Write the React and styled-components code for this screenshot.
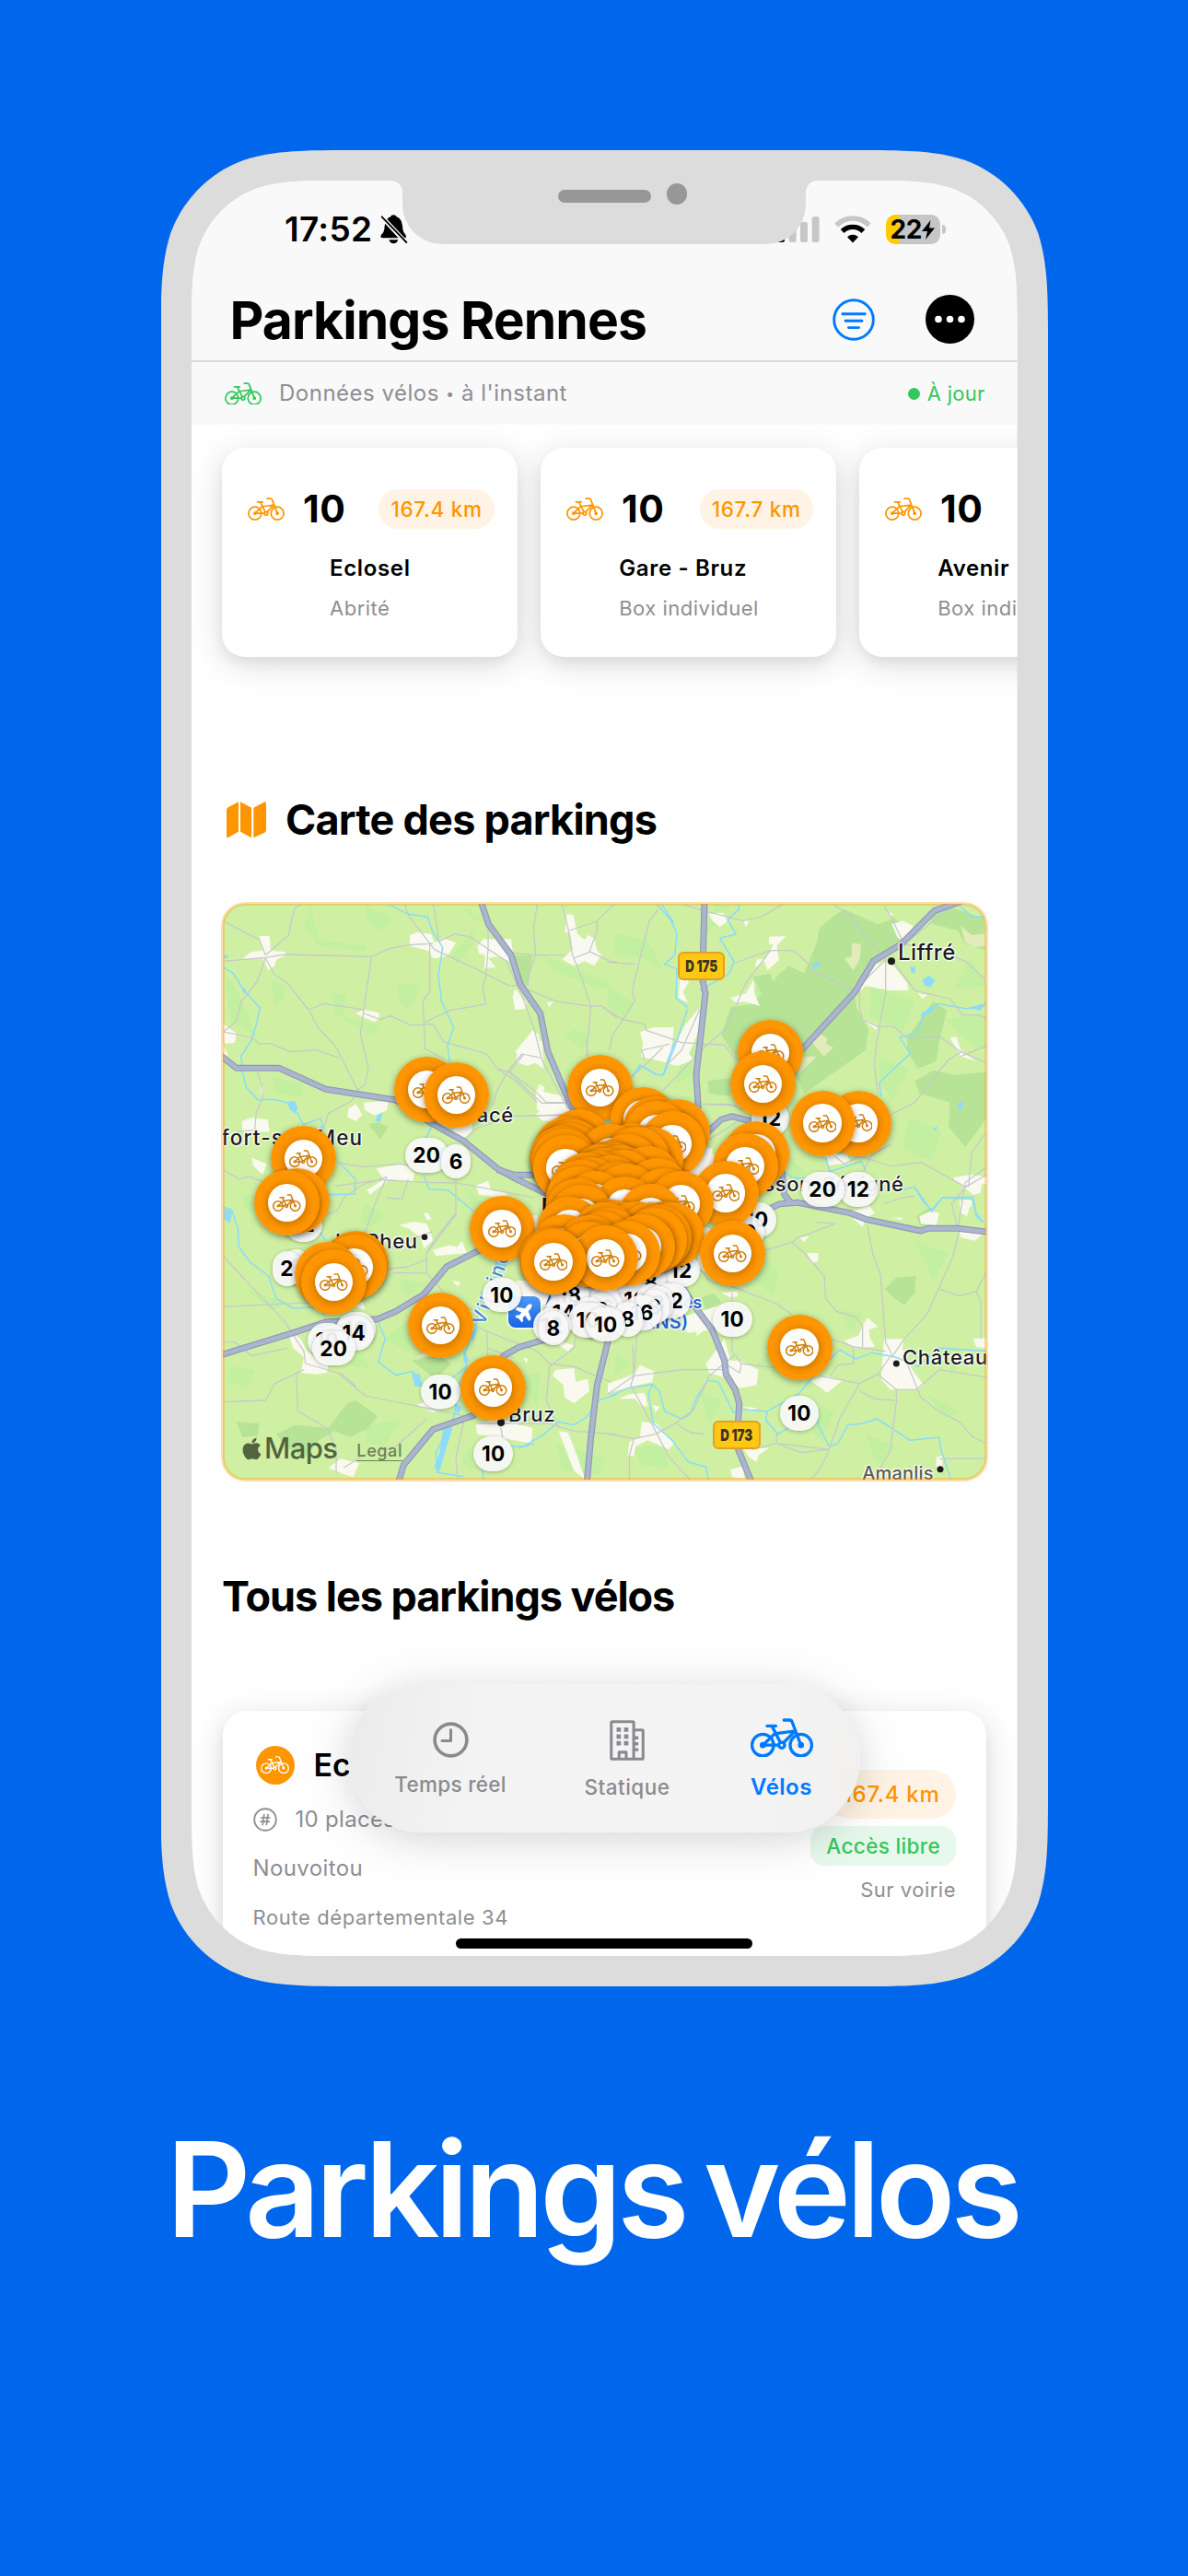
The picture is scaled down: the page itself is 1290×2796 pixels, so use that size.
import React from "react";
import styled, { createGlobalStyle } from "styled-components";
import { FaApple, FaPlane } from "react-icons/fa";

const Global = createGlobalStyle`
  * { box-sizing: border-box; }
  body { margin: 0; background: #0067ec; font-family: Inter, "Liberation Sans", sans-serif; color: #000; }
`;

/* Continuous-curvature rounded rectangle, used as a clip for the device and its screen. */
const smoothRect = (w, h, r) => {
  const a = 1.5287 * r, b = 1.0885 * r, c = 0.8684 * r, d = 0.6315 * r, e = 0.0749 * r, f = 0.3728 * r, g = 0.1691 * r;
  return `M${a} 0H${w - a}C${w - b} 0 ${w - c} 0 ${w - d} ${e}C${w - f} ${g} ${w - g} ${f} ${w - e} ${d}C${w} ${c} ${w} ${b} ${w} ${a}` +
    `V${h - a}C${w} ${h - b} ${w} ${h - c} ${w - e} ${h - d}C${w - g} ${h - f} ${w - f} ${h - g} ${w - d} ${h - e}C${w - c} ${h} ${w - b} ${h} ${w - a} ${h}` +
    `H${a}C${b} ${h} ${c} ${h} ${d} ${h - e}C${f} ${h - g} ${g} ${h - f} ${e} ${h - d}C0 ${h - c} 0 ${h - b} 0 ${h - a}` +
    `V${a}C0 ${b} 0 ${c} ${e} ${d}C${g} ${f} ${f} ${g} ${d} ${e}C${c} 0 ${b} 0 ${a} 0Z`;
};

const Page = styled.main`
  width: 1290px;
  height: 2796px;
  overflow: hidden;
  padding-top: 163px;
  background: #0067ec;
`;
const Phone = styled.section`
  width: 963.5px;
  height: 1993px;
  margin-left: 174.5px;
  padding: 33px 33.5px;
  background: #dcdcdc;
  clip-path: path("${smoothRect(963.5, 1993, 143)}");
`;
const Screen = styled.div`
  position: relative;
  width: 896.5px;
  height: 1927px;
  overflow: hidden;
  display: flex;
  flex-direction: column;
  background: #fff;
  clip-path: path("${smoothRect(896.5, 1927, 112)}");
`;
const Notch = styled.div`
  position: absolute;
  top: -1px;
  left: 229px;
  width: 438px;
  height: 69.5px;
  padding-left: 169px;
  background: #dcdcdc;
  border-radius: 0 0 43px 43px;
  display: flex;
  gap: 16.7px;
  &::before, &::after {
    content: "";
    position: absolute;
    top: 0;
    width: 12px;
    height: 13px;
    background: radial-gradient(circle at 0 100%, transparent 11.5px, #dcdcdc 12px);
  }
  &::before { left: -12px; }
  &::after { right: -12px; transform: scaleX(-1); }
`;
const Speaker = styled.div`
  width: 101px;
  height: 14px;
  margin-top: 11px;
  border-radius: 7px;
  background: #979797;
`;
const Lens = styled.div`
  width: 22.5px;
  height: 22.5px;
  margin-top: 4px;
  border-radius: 50%;
  background: #979797;
`;

const StatusRow = styled.div`
  height: 106px;
  flex: none;
  display: flex;
  align-items: center;
  padding: 0 78px 0 101px;
  background: #f9f9f9;
`;
const Clock = styled.span`
  font-size: 37px;
  font-weight: 600;
  letter-spacing: 0.3px;
  line-height: 44px;
  margin-right: auto;
  display: flex;
  align-items: center;
  gap: 9px;
`;
const StatusIcons = styled.div`
  display: flex;
  align-items: center;
  gap: 16px;
`;
const Battery = styled.div`
  position: relative;
  width: 59px;
  height: 32px;
  border-radius: 10px;
  display: flex;
  align-items: center;
  padding-left: 5px;
  margin-right: 6px;
  background: linear-gradient(90deg, #ffcc00 14px, #c6c6c6 14px);
  font-size: 28px;
  font-weight: 700;
  letter-spacing: -0.4px;
  &::after {
    content: "";
    position: absolute;
    right: -6px;
    top: 11px;
    width: 4px;
    height: 10px;
    border-radius: 0 5px 5px 0;
    background: #c6c6c6;
  }
`;

const TitleBar = styled.header`
  height: 91px;
  flex: none;
  display: flex;
  align-items: center;
  padding: 0 47px 0 41.5px;
  background: #f9f9f9;
  border-bottom: 2px solid #dadadb;
`;
const Title = styled.h1`
  margin: 3px auto 0 0;
  font-size: 57px;
  line-height: 68px;
  font-weight: 700;
  letter-spacing: -0.93px;
  white-space: nowrap;
`;
const HeaderIcons = styled.div`
  display: flex;
  align-items: center;
  gap: 54.5px;
`;
const SyncBar = styled.div`
  height: 68px;
  flex: none;
  display: flex;
  align-items: center;
  gap: 19px;
  padding: 0 35px 0 36px;
  background: #f9f9f9;
`;
const T = styled.span`
  font-size: ${(p) => p.$s}px;
  line-height: ${(p) => p.$lh || 28}px;
  font-weight: ${(p) => p.$w || 400};
  letter-spacing: ${(p) => p.$ls || 0}px;
  color: ${(p) => p.$c || "#8e8e93"};
  white-space: nowrap;
  & > small { font-size: 0.68em; vertical-align: 0.1em; }
`;
const Fresh = styled.span`
  margin-left: auto;
  display: flex;
  align-items: center;
  gap: 8px;
`;
const Dot = styled.i`
  width: 13px;
  height: 13px;
  border-radius: 50%;
  background: #34c759;
`;

const Carousel = styled.div`
  flex: none;
  display: flex;
  gap: 25.3px;
  padding: 25px 0 0 33px;
`;
const Card = styled.article`
  flex: none;
  width: 320.7px;
  height: 227px;
  padding: 45px 25px 0 28px;
  border-radius: 25px;
  background: #fff;
  box-shadow: 0 8px 34px rgba(40, 40, 60, 0.17), 0 6px 12px rgba(40, 40, 60, 0.05);
`;
const CardHead = styled.div`
  display: flex;
  align-items: center;
  height: 43px;
  gap: 20px;
`;
const Pill = styled.span`
  margin-left: auto;
  height: ${(p) => p.$h || 43}px;
  border-radius: ${(p) => p.$r || 21}px;
  padding: 0 ${(p) => p.$px || 13}px;
  background: ${(p) => p.$bg || "#fff3e5"};
  display: flex;
  align-items: center;
`;
const CardText = styled.div`
  display: flex;
  flex-direction: column;
  gap: 14px;
  margin-top: 28px;
  padding-left: ${(p) => p.$indent}px;
`;
const Heading = styled.h2`
  flex: none;
  display: flex;
  align-items: center;
  gap: 21px;
  height: 60px;
  margin: ${(p) => p.$mt}px 0 0 ${(p) => p.$ml}px;
  font-size: 45px;
  line-height: 60px;
  font-weight: 700;
  letter-spacing: ${(p) => p.$ls}px;
  white-space: nowrap;
`;

const MapCard = styled.div`
  position: relative;
  flex: none;
  width: 832.5px;
  height: 629px;
  margin: 59px 0 0 32px;
  border-radius: 26px;
  overflow: hidden;
  background: #fff;
  &::after {
    content: "";
    position: absolute;
    inset: 0;
    border-radius: 26px;
    border: 4px solid rgba(255, 149, 0, 0.33);
    z-index: 5;
  }
`;
const MapCanvas = styled.div`
  position: absolute;
  inset: 2px;
  border-radius: 24px;
  overflow: hidden;
  & > svg { display: block; position: absolute; left: -2px; top: -2px; }
`;
const Place = styled.span`
  position: absolute;
  left: ${(p) => p.$x - 242}px;
  top: ${(p) => p.$y - 981}px;
  transform: translateY(-50%) rotate(${(p) => p.$rot || 0}deg);
  transform-origin: 0 50%;
  font-size: ${(p) => p.$s || 22}px;
  line-height: 26px;
  font-weight: ${(p) => p.$w || 500};
  letter-spacing: ${(p) => p.$ls ?? 0.7}px;
  color: ${(p) => p.$c || "#1c1c1e"};
  white-space: nowrap;
  text-shadow: 0 0 2px #fff, 0 0 2px #fff, 0 0 3px #fff, 1px 1px 1px #fff, -1px -1px 1px #fff;
`;
const Shield = styled.span`
  position: absolute;
  left: ${(p) => p.$x - 242}px;
  top: ${(p) => p.$y - 981}px;
  width: 51.5px;
  height: 31px;
  border: 2px solid #e3a024;
  border-radius: 6px;
  background: #ffc814;
  color: #3b3620;
  font: 700 18px/27px Inter, sans-serif;
  display: flex;
  justify-content: center;
  & > b { transform: scaleX(0.74); white-space: nowrap; }
`;
const Airport = styled.span`
  position: absolute;
  left: 310px;
  top: 426px;
  width: 35px;
  height: 34px;
  border-radius: 8px;
  background: linear-gradient(#4d9af5, #1a62e6);
  box-shadow: 0 0 0 2px rgba(255, 255, 255, 0.6);
  display: flex;
  align-items: center;
  justify-content: center;
  color: #fff;
  & > svg { transform: rotate(-50deg); }
`;
const Pin = styled.div`
  position: absolute;
  left: ${(p) => p.$x - 242 - 40}px;
  top: ${(p) => p.$y - 981 - 35.5}px;
  width: 80px;
  display: flex;
  flex-direction: column;
  align-items: center;
  gap: 17.5px;
`;
const PinDisc = styled.div`
  width: 71px;
  height: 71px;
  border-radius: 50%;
  display: flex;
  align-items: center;
  justify-content: center;
  background: radial-gradient(circle at 50% 52%, #d97f00 20px, #f08c00 24px, #ff9500 29px);
  box-shadow: 0 2px 7px rgba(0, 0, 0, 0.42);
`;
const PinCore = styled.div`
  width: 41.5px;
  height: 41.5px;
  border-radius: 50%;
  background: #fff;
  display: flex;
  align-items: center;
  justify-content: center;
`;
const PinCount = styled.span`
  height: 37.5px;
  min-width: 32px;
  padding: 0 8.5px;
  border-radius: 19px;
  background: rgba(246, 246, 246, 0.94);
  box-shadow: 0 1px 4px rgba(0, 0, 0, 0.28);
  font-size: 22.5px;
  font-weight: 700;
  line-height: 37.5px;
  letter-spacing: 0.3px;
`;
const Attribution = styled.div`
  position: absolute;
  left: 18px;
  top: 573px;
  height: 36px;
  display: flex;
  align-items: center;
  color: #52633f;
  & u {
    margin: 5px 0 0 21px;
    font-size: 18px;
    font-weight: 500;
    letter-spacing: 0.6px;
    color: #6c8158;
    text-underline-offset: 4px;
  }
`;

const ListCard = styled.article`
  flex: none;
  display: flex;
  justify-content: space-between;
  width: 829.5px;
  height: 380px;
  margin: 94px 0 0 33.5px;
  padding: 38px 33px 0 33px;
  border-radius: 26px;
  background: #fff;
  box-shadow: 0 8px 34px rgba(40, 40, 60, 0.17), 0 6px 12px rgba(40, 40, 60, 0.05);
`;
const ListMain = styled.div`
  display: flex;
  flex-direction: column;
  gap: 23px;
`;
const ListRow = styled.div`
  display: flex;
  align-items: center;
  gap: ${(p) => p.$gap || 0}px;
  height: ${(p) => p.$h || 30}px;
`;
const BikeBadge = styled.div`
  width: 42px;
  height: 42px;
  margin-left: 3px;
  border-radius: 50%;
  background: #ff9500;
  display: flex;
  align-items: center;
  justify-content: center;
`;
const ListSide = styled.div`
  display: flex;
  flex-direction: column;
  align-items: flex-end;
  padding-top: 26px;
  gap: 8px;
`;
const TabBar = styled.nav`
  position: absolute;
  left: 170px;
  top: 1632px;
  width: 556px;
  height: 161px;
  border-radius: 81px;
  background: linear-gradient(100deg, #ebebec 0%, #f3f3f4 25%, #f4f4f4 75%, #f1f0ef 100%);
  box-shadow: 0 8px 60px rgba(0, 0, 0, 0.13), 0 6px 30px rgba(0, 0, 0, 0.05);
`;
const TabList = styled.div`
  display: grid;
  grid-template-columns: 120px 95px 71px;
  column-gap: 84.5px;
  padding: 37px 0 0 51px;
`;
const Tab = styled.div`
  display: flex;
  flex-direction: column;
  align-items: center;
  height: 90px;
  & > svg { flex: none; margin-top: ${(p) => p.$mt}px; }
  & > span { margin-top: ${(p) => p.$gap}px; }
`;
const HomeBar = styled.div`
  position: absolute;
  left: 287px;
  top: 1908px;
  width: 322px;
  height: 11px;
  border-radius: 6px;
  background: #000;
`;
const Caption = styled.h3`
  margin: 130px 0 0 180.5px;
  font-size: 142.5px;
  line-height: 180px;
  font-weight: 600;
  letter-spacing: -5.2px;
  word-spacing: -10px;
  color: #fff;
  white-space: nowrap;
`;

const Bike = ({ w, color, sw = 9 }) => (
  <svg width={w} height={(w * 128) / 205} viewBox="0 0 205 128" fill="none" stroke={color} strokeWidth={sw} strokeLinecap="round" strokeLinejoin="round">
    <circle cx="40" cy="88" r="35.5" />
    <circle cx="165" cy="88" r="35.5" />
    <circle cx="102" cy="88" r="9.5" />
    <circle cx="40" cy="88" r="5" fill={color} />
    <circle cx="165" cy="88" r="5" fill={color} />
    <path d="M40 88H92M40 88L79 51M70 26L98 80M54 25H83M82 50L146 42L108 80M109 6H128Q134 6 136 12L165 88" />
  </svg>
);

const BellOffIcon = () => (
  <svg width="30" height="32" viewBox="0 0 90 96">
    <path d="M43 1Q51 1 53 7Q69 13 72 36Q73 54 78 60Q84 66 84 72Q84 76 78 76H8Q1 76 1 71Q1 66 8 60Q13 54 14 36Q17 13 33 7Q35 1 43 1ZM28 82H58Q54 94 43 94Q32 94 28 82Z" />
    <path d="M-2 0L88 96" stroke="#f9f9f9" strokeWidth="15" />
    <path d="M5 7L85 90" stroke="#000" strokeWidth="5.5" strokeLinecap="round" />
  </svg>
);
const ClockIcon = () => (
  <svg width="39" height="39" viewBox="0 0 39 39" fill="none" stroke="#8a8a8e" strokeWidth="3.6" strokeLinecap="round" strokeLinejoin="round">
    <circle cx="19.5" cy="19.5" r="17.4" />
    <path d="M19.5 8.5V20.5H10" strokeWidth="3" />
  </svg>
);
const BuildingIcon = () => (
  <svg width="38" height="44" viewBox="0 0 112 130" fill="none" stroke="#8a8a8e" strokeWidth="9" strokeLinejoin="round">
    <rect x="5" y="5" width="72" height="120" rx="4" />
    <path d="M78 32H103Q107 32 107 36V121Q107 125 103 125H78M30 124V103H53V124" />
    <path d="M22 31H36M46 31H60M22 53H36M46 53H60M22 74H36M46 74H60" strokeWidth="14" />
    <path d="M80 57H92M80 76H92M80 95H92" strokeWidth="10" />
  </svg>
);
const FilterIcon = () => (
  <svg width="46" height="46" viewBox="0 0 46 46" fill="none" stroke="#007aff" strokeWidth="2.9" strokeLinecap="round">
    <circle cx="23" cy="23" r="21.3" />
    <path d="M10.8 16.8H35.2M14 24.2H32M17.4 31.6H28.6" />
  </svg>
);
const MoreIcon = () => (
  <svg width="53" height="53" viewBox="0 0 53 53">
    <circle cx="26.5" cy="26.5" r="26.5" />
    <g fill="#fff"><circle cx="14" cy="26.5" r="3.8" /><circle cx="26.5" cy="26.5" r="3.8" /><circle cx="39" cy="26.5" r="3.8" /></g>
  </svg>
);
const SignalIcon = () => (
  <svg width="46" height="30" viewBox="0 0 46 30" fill="#c7c7c8">
    <rect x="0" y="18" width="8" height="11" rx="2.5" fill="#000" />
    <rect x="12.6" y="12" width="8" height="17" rx="2.5" />
    <rect x="25" y="7" width="8" height="22" rx="2.5" />
    <rect x="37.6" y="1" width="8" height="28" rx="2.5" />
  </svg>
);
const WifiIcon = () => (
  <svg width="40" height="30" viewBox="0 0 40 30" fill="none" strokeWidth="5.4">
    <path d="M2.2 10.5A25 25 0 0 1 37.8 10.5" stroke="#c7c7c8" />
    <path d="M8.6 17A16.3 16.3 0 0 1 31.4 17" stroke="#000" />
    <path d="M20 29.5L14 23.2A8.6 8.6 0 0 1 26 23.2Z" fill="#000" />
  </svg>
);
const BoltIcon = () => (
  <svg width="14" height="21" viewBox="0 0 14 21"><path d="M9.5 0L0 12H6L4 21L14 8.5H8Z" /></svg>
);
const MapIcon = () => (
  <svg width="43" height="40" viewBox="0 0 129 120" fill="#ff9500">
    <path d="M0 28Q0 22 5 19L39 1V98L6 117Q0 120 0 113ZM45 1L81 20V118L45 98ZM88 20L122 2Q129 -1 129 6V92Q129 98 124 101L88 118Z" />
  </svg>
);
const HashIcon = () => (
  <svg width="26" height="26" viewBox="0 0 26 26" fill="none" stroke="#8e8e93" strokeWidth="1.9" strokeLinecap="round">
    <circle cx="13" cy="13" r="11.8" />
    <path d="M11.8 7.5L10.2 18.5M16 7.5L14.4 18.5M8.6 11H17.8M8 15.2H17.2" strokeWidth="1.7" />
  </svg>
);

const g = (x, y) => `translate(${x} ${y}) scale(0.33333)`;

const MOTORWAYS = [
  [230, 840, "M876 415L902 490L975 590L1005 685L1070 780L1095 905L1165 1070L1200 1140"],
  [230, 840, "M30 918L80 958H220L372 1027L600 1062L720 1140L820 1195L930 1285L990 1318L1100 1372"],
  [230, 1200, "M930 208L985 226H1080"],
  [230, 1200, "M30 812L265 740L370 705L540 695L600 670L690 615L765 525L870 472L1000 440"],
  [230, 1200, "M608 1225L625 1170L720 1055L850 1010L900 950L950 815L1000 787L1090 760"],
  [230, 1200, "M1222 1225L1235 1080L1255 910L1290 770L1300 600"],
  [660, 960, "M315 55L308 310L318 355L288 620L295 730"],
  [660, 960, "M1150 55L1065 85L955 195L865 250L805 350L640 530L560 600"],
  [660, 960, "M310 820L370 765L405 755L470 772L560 860L575 1010L600 1040"],
  [660, 1280, "M530 95L560 80L620 76L790 110L840 130L1020 168L1045 160H1140L1240 172"],
  [660, 1280, "M230 330L280 410L340 490L380 590L385 635L415 685L428 730L424 800L425 880L468 985"],
];
const MINOR = [
  [230, 840, "M38 480L155 540L175 590L250 525L268 440L290 425M38 610L175 598L240 588L520 595L580 568L645 557L720 552M175 600L205 655L245 680L315 768L345 825L405 890L475 1030M520 595L495 770L484 845L510 960L500 1010L475 1030M315 768L365 748L495 768M495 780L550 800L582 788L648 818L720 815L755 872L895 912L930 960L965 970L1075 1072H1160M628 425L640 460L725 572L860 635L965 688L1000 690L1120 740L1235 757L1270 755L1320 795M710 555V710L688 738L695 895L760 930M722 425L740 545L790 522L840 530L900 570M900 490V570L893 660L882 695L893 750L775 770L695 808M900 570L960 610L1010 720L1050 830L1075 930L1160 1090M985 583L1060 590H1150M1060 425L1048 500L1055 590L1030 660V690M1140 425L1160 500L1175 590L1200 650L1235 757L1220 920M1255 480L1165 510M1255 480V510L1230 580L1180 600M1230 578L1300 612H1320M1255 478L1310 425M175 600L148 675L95 742L80 805L38 840L130 858L155 878H190L255 905L340 898L415 925M1075 925L1010 912L960 975L930 1030L915 1080M148 970L165 1020V1060L145 1100L140 1160L80 1165M475 1030L455 1065L380 1105L350 1200M820 1200L860 1155L980 1115L1160 1110"],
  [660, 960, "M165 80L135 120L85 320L80 350L88 380L50 440L120 455L125 475L200 500L240 515L380 522L420 575M0 410L50 440L15 490L5 540M0 253L90 260M245 65L330 90L440 118L500 105L570 65M415 255L530 215H605L650 255L665 280L800 345M530 215L450 320L385 470L320 525L180 670M735 65L795 105L865 200L905 245V350L875 520L868 590L880 680M925 245L1000 345L1115 372L1155 425H1205L1235 435M905 245L820 330V400L830 440L880 463H930L975 500L1080 495L1150 545L1230 580M1150 545L1110 570L1000 710L920 750M970 195L1075 215L1165 250L1230 310M1115 75L965 195M900 70L925 110L965 195M1235 525L1150 560M310 715H400L440 735M330 830L380 800L440 760M590 890L560 870M740 885L770 910L820 885L925 918L1022 905L1165 985L1235 945M925 845L860 880L830 940M300 405L240 540L190 590M1230 810L1185 875L1175 985"],
  [230, 1200, "M410 185L490 200L600 190L700 198M400 262L550 242L700 250L800 252L1050 300M350 365L410 340L430 300L490 258L570 232M570 232L540 300L500 410L480 470M38 490L120 580L235 700L300 800L305 840L410 870L500 945L700 985L820 1010M38 770H75L130 815L245 790M38 965L175 960L205 905L300 860M275 870L280 995L375 1050L405 1120V1200M430 1180L490 1140L600 1110L700 1020M795 240V355L700 480V545L590 545M720 410L640 440L575 470M700 480L730 430L795 350M700 545L770 625L880 680M740 660L895 735L910 1020M895 735L1060 800L1100 840L1180 850M1200 640L1180 790L1100 850L1090 960L1130 1050M1180 850L1300 900M870 1035H1100L1180 1060L1320 1070M940 1040L950 1100M820 1030L795 1150L800 1215M980 820L900 790M38 210L90 240L120 230L200 262M490 540L640 525L700 500M370 690L340 640L38 655M570 300L620 305L640 240M470 915L420 870M1000 1040L1080 1000"],
  [660, 1280, "M845 150L865 250L888 310L905 530L925 570L880 635L940 685V725L920 885L885 945M1145 165L1125 250L1040 440L965 520L925 580M405 350L550 405L600 440M730 520L800 545L905 560M405 370V560L435 600L590 620M410 575L380 600L430 630L435 600M85 640L240 620H380M85 640L75 670L145 800L200 905L270 980M80 540L85 640M0 830L85 845L155 830L220 795L270 825L315 830M220 795L280 750L330 640L380 600M500 235L600 205L620 190L740 145M600 205L640 240L705 315L710 390L745 430L810 450L830 480V545M940 685H1005L1080 620L1235 645M975 600L1020 710L1070 750L1145 790L1190 840L1235 860M1075 355L1145 380L1200 365L1235 300M1200 365L1215 400V520M690 640L820 665L880 635M820 690L870 715L935 720M820 665L755 780L720 885L690 945L660 980M550 825V860L630 890L720 880L550 860L470 880M800 545V600L750 605L725 640M740 145L680 140M300 290L330 330L440 360M95 500L85 640L0 700M1140 160L1165 10L1235 -40M1170 20L1120 80L1140 160M900 80L960 60L1000 55M85 845L70 900V980M1080 910H1235"],
  [540, 1130, "M85 45L40 100L120 160L160 200H230M0 90L60 130L130 200M30 245L240 240M290 0L295 50M435 120L500 60L540 20M670 205L780 210M480 60L470 30L560 10M700 10L670 15"],
];
const WATER = [
  [230, 840, "M575 425L640 457L702 465L720 515L752 565L738 655L748 740L788 825L768 885L775 940M36 628L70 650L105 705L157 762L145 815L130 865L95 920L102 980L112 1020L150 1062L200 1060L245 1070L275 1100L298 1142L355 1122L365 1160M715 1150L690 1200"],
  [660, 960, "M160 65L205 115L225 160L218 230L185 260L225 275L222 370L260 400M425 65L428 80L390 115L418 162L365 175L412 252L395 290L300 345M260 405L225 510L182 620L155 618L108 590L80 625M175 65L215 125M1140 65L1185 105H1225M1235 388L1170 405L1075 388L1030 425L1005 485L950 497L985 550L885 645L890 690M710 888L722 935L825 902L840 930M580 940L600 955L650 960M940 1000L1000 985L1025 1030L1055 1060L1090 1020L1190 1018L1200 1070L1220 1100"],
  [230, 1200, "M36 330L65 340L85 400L88 460L125 510L185 555L210 628L265 660L400 655L440 650M540 700L565 760L542 835L600 878L655 865L690 920L700 950M415 185L468 240L465 288L380 290M690 225L708 272L768 275L855 345M350 410L370 440M355 65L372 110M960 510L940 540L880 610L860 720L825 800L830 850L780 890M830 850L800 930L790 1010L765 1060L730 1130L735 1195L820 1208M940 1110H1015L1075 1075L1130 1030L1180 1040L1220 1015L1260 960L1320 940M880 1180L885 1220M1050 1100L1000 1115"],
  [660, 1280, "M0 710L65 680L145 668L132 700L148 795L210 850L262 920L320 937L328 985M145 668L168 690L185 755L240 780L268 765L290 710L325 655L360 660L410 760L440 750L520 755L620 700L680 630L755 555L808 585L860 565L940 580L1010 610L1080 550L1235 560M520 755L515 785L555 830L620 790M680 775L690 810L722 870L750 860L782 800L830 795L878 780L985 850L1080 840L1085 880L1120 985M1000 25L1055 105L1090 60L1190 65L1200 120L1225 140"],
  [540, 1130, "M578 0L540 110H522L465 78L438 115"],
];
const LAKES = [
  [230, 840, "M245 1068L270 1065L280 1085L272 1105L255 1095ZM540 1110L556 1105L548 1135L532 1130ZM40 590L55 588L50 600L38 600ZM98 700L110 698L112 712L104 716Z"],
  [660, 960, "M665 262L692 250L690 265L670 275ZM1025 310L1045 297L1068 312L1050 335L1030 328ZM985 268L1003 268L1000 290L988 288ZM1020 420L1065 392L1060 410L1022 435ZM1170 403L1232 388L1215 410ZM1140 710L1157 708L1155 735L1142 732ZM1056 800L1074 786L1070 800Z"],
  [230, 1200, "M40 335L66 345L60 385L40 370ZM650 870L678 875L685 915L662 915ZM755 1045L785 1048L765 1110L742 1190L724 1180L742 1130ZM790 970L815 980L800 1010ZM925 500L965 510L950 540L920 530ZM870 720L850 770L840 740ZM820 795L838 830L820 838Z"],
];
const FORESTS = [
  [660, 960, "M400 400L470 390L560 290L590 265L640 290L680 190L690 140L740 100L770 80L880 130L930 110L985 145L960 200L880 250L800 330L810 400L850 470L840 540L740 610L640 680L600 600L420 570L370 490ZM1040 90L1120 75L1225 110L1230 215L1165 195L1140 150L1060 130ZM975 500L1060 380L1105 410L1080 510L1070 575L1010 600L975 540ZM1000 640L1060 605L1130 620L1235 610V760L1165 855L1110 790L1115 710L1015 680ZM470 300L530 290L540 330L505 360ZM325 640L400 630L400 690L330 680Z"],
  [660, 1280, "M902 358L940 320L1003 315L1000 370L965 410L930 385ZM305 385L345 372L370 400L320 430ZM1005 120L1050 90L1060 150L1020 160Z"],
  [230, 840, "M985 590L1045 590L1030 690L1000 680ZM510 1140L545 1135L575 1150L550 1190Z"],
  [230, 1200, "M440 970L470 960L540 1010L510 1050L450 1080L400 1060L350 1090L300 1150L240 1110L210 1070L270 1040L380 1050ZM650 830L740 815L780 840L730 890ZM80 1030L155 1035L150 1075L100 1080Z"],
];
const MEADOWS = [
  [230, 840, "M500 430L590 470L550 510L505 480ZM320 430L350 540L500 560L505 580L350 560L300 500ZM390 715L440 715L430 790L550 820L520 850L400 780ZM190 670L240 690L230 740L205 750ZM600 680L680 690L640 770L610 740ZM1060 560L1100 600L1200 640L1310 690L1260 700L1110 640ZM200 985L300 1010L290 1050L210 1040ZM38 640L90 720L150 860L60 800ZM780 590L860 500L850 560L800 620ZM810 430L880 470L860 480ZM1180 830L1230 850L1210 900L1150 850Z"],
  [660, 960, "M20 160L130 180L180 280L110 240L20 230ZM0 330L80 380L60 440L0 400ZM350 60L400 70L300 190ZM480 330L640 420L560 480L480 400ZM860 330L1000 380L960 480L850 430ZM1100 440L1230 420V540L1180 520ZM880 560L980 600L930 700L890 650ZM980 760L1090 800L1050 900L960 860ZM240 560L290 520L280 620L220 650ZM600 900L640 930L630 1000L590 960ZM1180 240L1235 330L1130 340Z"],
  [230, 1200, "M100 290L180 300L200 360L110 340ZM500 320L560 350L520 400L480 380ZM600 560L700 580L640 620ZM110 600L240 640L200 670ZM380 780L480 800L520 860L420 840ZM60 850L140 860L120 920L50 900ZM500 1040L620 1020L560 1110L500 1100ZM820 260L900 330L850 340ZM650 690L640 800L560 760ZM1000 880L1070 870L1060 980ZM1120 1100L1280 1150L1260 1200L1140 1190ZM840 1100L850 1190L810 1170Z"],
  [660, 1280, "M500 250L560 300L540 380L480 330ZM640 500L720 540L690 580ZM760 420L830 440L790 500ZM1000 200L1110 240L1060 330ZM30 560L70 600L20 640ZM80 880L180 860L200 940L110 930ZM520 560L560 640L480 610ZM630 770L700 740L740 760L690 850ZM1090 540L1160 560L1120 640ZM840 830L940 870L880 930ZM1040 700L1150 760L1100 780ZM300 690L370 720L330 800Z"],
];
const TOWNS = [
  [230, 840, "M155 528H188L192 575L240 580L238 592L210 605L205 625L185 640L165 600L100 602L128 580L165 575ZM645 525L670 515L715 522L725 550L755 535L795 550L770 590L735 600H720L705 575L645 560ZM865 560L885 538L975 538L980 575L970 610L930 595L900 600L925 630L888 632L890 590L870 585ZM1157 455L1178 460L1190 520L1215 540L1225 525L1245 535L1255 575L1270 590L1245 625L1215 610L1180 625L1142 605L1175 570L1168 520L1150 515ZM468 780L495 768L545 778V798L530 808L500 795ZM38 815L80 845L75 875L40 878ZM988 700L1025 745L1020 765L988 768L980 725ZM1045 835L1065 850L1080 960L1060 945L1020 930L988 905ZM1055 1030L1150 1050L1145 1085L1180 1110L1060 1095ZM1065 1010L1085 1020L1080 1035L1060 1030ZM1090 745L1112 740L1100 760ZM495 1070L575 1065L570 1095L530 1112L498 1095ZM445 1090L470 1075L490 1110L470 1130L442 1118ZM130 1120L182 1125L188 1165L100 1168L98 1130ZM36 880L55 920L38 915ZM800 1140L850 1130L845 1165L810 1195L780 1170ZM160 1020L168 1020V1045H160Z"],
  [660, 960, "M525 170L580 168L550 200L558 245L520 280L510 250L480 270L485 245L515 240L540 195L525 195ZM330 95L375 92L390 120L365 138L340 118ZM105 480L150 465L215 465L210 520L190 580L108 560L115 520ZM300 400L295 480L260 560L215 590L210 540L250 460ZM235 300L265 315L245 350L260 385L230 370ZM400 370L450 355L475 310L478 355L495 395L445 382L415 385ZM925 130L960 118L995 135L980 190L945 175ZM815 355L850 270L900 250L930 265L975 320L980 345H915L840 330ZM1115 500L1135 495L1150 540L1200 575L1150 560ZM825 435L880 460L875 475ZM1125 955L1180 945L1220 950L1215 1005L1190 1010L1165 990L1130 965ZM440 115L460 120L450 138ZM910 90L930 95L920 105ZM1010 355L1042 360L1025 372ZM700 875L780 880L790 905L720 915ZM330 870L345 880L350 915L315 905ZM1145 1025H1185V1050ZM250 920L300 930L310 970L260 960Z"],
  [230, 1200, "M130 170L180 190L165 225L135 195ZM535 205L625 190L660 220L655 250L580 240L515 290L505 275L560 240ZM860 260L900 245L910 275L965 285L950 300L870 290ZM610 390L660 378L700 385L715 420L720 440L690 465L680 430L640 400ZM690 350H705L715 370L700 372ZM720 470L770 455L800 460L815 440L830 480L730 490ZM785 570L810 575L800 590ZM245 730L290 760L310 800L380 840L375 870L340 875L290 870L300 820L265 790ZM460 650L490 640L500 665ZM860 1040L930 1020L1045 1050L1040 1100L960 1085L865 1070ZM1120 860L1180 855L1185 900L1225 890L1230 930L1180 970L1150 950L1145 910L1110 880ZM1130 1060L1160 1065L1190 1140L1215 1215L1180 1190ZM380 1180L420 1150L480 1165L460 1210L430 1200ZM1100 760L1180 780L1160 800ZM670 975L720 950L760 985L720 1000ZM670 820L700 800L740 810ZM1020 365L1060 355L1060 440L1020 420ZM1015 820L1030 825L1025 840Z"],
  [660, 1280, "M85 635L105 605L150 625L145 660L100 670L0 695V665ZM70 700L120 695L130 740L105 735L90 715L35 715ZM110 790L160 795L215 860L200 880L130 850L90 870L85 900H65L70 855L105 840ZM320 600L350 560L380 520L400 590L430 590L490 620L485 670L430 680L395 650L330 630ZM370 370L420 365L425 380L400 385ZM625 190L655 185L640 205ZM650 240L685 240V265L665 275ZM770 525L815 510L845 450L880 480L850 490L855 520L870 545L800 550ZM900 520H965L960 550L985 610L1028 670L1010 685L920 685L890 650ZM660 655L710 640L765 655L740 675L715 695ZM780 110L850 85L870 110L840 125L830 155ZM1015 120L1050 105L1080 110L1070 150L1020 145ZM1145 170L1220 180L1195 200L1150 190ZM920 125H960V132ZM1145 70L1180 85L1170 120L1150 110ZM440 875L525 875L490 900L485 920L460 905ZM400 945L440 935L445 975L405 970ZM1190 520L1230 515V550L1200 545ZM1070 905L1090 900V945L1070 935ZM290 450L310 440L315 490L290 510ZM440 740L485 745L470 755ZM145 735L170 740L155 760ZM1130 5L1235 -10V15L1150 20Z"],
  [540, 1130, "M65 35L100 0H145L150 60L100 80L60 70ZM480 0H565L570 30L545 60L475 55ZM560 30L600 10L640 60L590 80L560 75ZM125 240L180 190L240 200L245 260H150ZM640 340L700 350V420L640 430ZM60 780H160L190 850L100 870ZM600 900L760 850L700 940L620 950ZM660 600L720 620L730 770L650 740ZM650 900L680 930L650 960Z"],
];
const FIELDS = [
  [660, 960, "M770 240L795 235V190L825 195L820 245L800 280ZM1150 135L1185 165L1230 160V200L1195 205L1165 190ZM635 560H680L640 600L620 620ZM690 485L715 500L710 520L735 530L705 560L660 510Z"],
];

const Layer = ({ data, ...rest }) => (
  <g {...rest}>{data.map(([x, y, d], i) => <path key={i} transform={g(x, y)} d={d} />)}</g>
);

const Terrain = () => (
  <svg width="832.5" height="629" viewBox="240 979 832.5 629" fill="none" strokeLinejoin="round">
    <rect x="240" y="979" width="833" height="629" fill="#cff0a3" />
    <Layer data={MEADOWS} fill="#c3efa0" />
    <Layer data={FORESTS} fill="#b7e396" />
    <Layer data={FIELDS} fill="#e2ecba" />
    <Layer data={TOWNS} fill="#f9f9f0" />
    <Layer data={LAKES} fill="#8edcf9" />
    <Layer data={WATER} stroke="#8adbfa" strokeWidth="4.5" />
    <Layer data={MINOR} stroke="#c6c9cb" strokeWidth="3.8" />
    <Layer data={MOTORWAYS} stroke="#8e99b8" strokeWidth="21" />
    <Layer data={MOTORWAYS} stroke="#abb5ce" strokeWidth="14" />
    <g fill="#1c1c1e">
      <circle cx="461" cy="1342.7" r="3.3" />
      <circle cx="544" cy="1544" r="4" />
      <circle cx="968" cy="1043.3" r="4" />
      <circle cx="973.3" cy="1480" r="3.5" />
      <circle cx="1021" cy="1594.7" r="3.5" />
    </g>
  </svg>
);

const e = (u, v, n) => [540 + u / 3, 1130 + v / 3, n];
const PINS = [
  [463.3, 1182.3, 20], [495.3, 1188.7, 6], [329.7, 1257.3, 12], [322, 1303, 6], [311.7, 1305.3, 2],
  [386.7, 1371, 10], [384.3, 1375.3, 14], [355.3, 1383, 10], [362.3, 1391.7, 20], [478.3, 1438.7, 10],
  [545, 1333.7, 10], [535.7, 1506, 10], [868, 1462.3, 10], [795.3, 1360.3, 10], [836.3, 1142.3, 12],
  [828.7, 1176.7, 12], [932, 1219, 12], [893.2, 1219.1, 20], [821.7, 1252, 10], [809, 1265.7, 10], [788, 1295, 10],
  e(334, 152, 10), e(474, 255, 10), e(513, 287, 10), e(587, 294, 8), e(519, 302, 10), e(570, 334, 8),
  e(265, 328, 8), e(225, 352, 8), e(245, 362, 8), e(232, 372, 8), e(212, 382, 8), e(216, 390, 8), e(222, 412, 10),
  e(370, 376, 8), e(440, 374, 8), e(455, 385, 8), e(500, 384, 8), e(425, 408, 8), e(360, 430, 8), e(380, 436, 8),
  e(340, 442, 8), e(400, 446, 8), e(350, 454, 8), e(490, 448, 8), e(410, 460, 8), e(325, 464, 8), e(290, 468, 8),
  e(370, 478, 8), e(300, 484, 8), e(520, 488, 8), e(395, 498, 8), e(270, 492, 8), e(420, 506, 8), e(265, 514, 8),
  e(540, 520, 8), e(320, 528, 8), e(415, 546, 8), e(262, 553, 8), e(275, 574, 8), e(500, 571, 8), e(598, 530, 12),
  e(236, 612, 18), e(370, 622, 8), e(390, 626, 10), e(350, 632, 8), e(450, 628, 10), e(360, 650, 6), e(340, 660, 8),
  e(500, 630, 8), e(569, 631, 12), e(545, 628, 8), e(525, 640, 8), e(512, 650, 8), e(217, 670, 14), e(472, 669, 16),
  e(300, 674, 8), e(320, 694, 10), e(295, 694.2, 10), e(425, 690, 8), e(178, 712, 12), e(353, 707, 10), e(183, 719, 8),
].sort((a, b) => a[1] - b[1]);

const PLACES = [
  ["Liffré", { $x: 975, $y: 1033.7, $s: 24, $ls: 0.5 }],
  ["Montfort-sur-Meu", { $x: 181, $y: 1234.5, $s: 22.5, $ls: 1.2 }],
  ["Pacé", { $x: 503, $y: 1210 }],
  ["Le Rheu", { $x: 364, $y: 1347 }],
  ["Bruz", { $x: 552, $y: 1535 }],
  ["Châteaugiron", { $x: 980, $y: 1472.5 }],
  ["Amanlis", { $x: 936.2, $y: 1598.5, $s: 20, $c: "#5b5b52", $ls: 0.2 }],
  ["Cesson-Sévigné", { $x: 799, $y: 1285, $ls: 0.6 }],
  ["Vilaine", { $x: 519, $y: 1437, $s: 21, $c: "#3f8fcb", $rot: -70, $ls: 2.5 }],
  ["Rennes", { $x: 588, $y: 1308, $s: 22, $w: 700 }],
  ["Aéroport de Rennes", { $x: 591, $y: 1414, $s: 18, $c: "#2763d2", $w: 600, $ls: -0.1 }],
  ["(RNS)", { $x: 691, $y: 1435, $s: 20, $c: "#2763d2", $w: 600, $ls: 0 }],
];

const CARDS = [
  { n: "10", km: "167.4 km", name: "Eclosel", kind: "Abrité", indent: 89 },
  { n: "10", km: "167.7 km", name: "Gare - Bruz", kind: "Box individuel", indent: 57.2 },
  { n: "10", km: "167.9 km", name: "Avenir", kind: "Box individuel", indent: 57.2 },
];

export default function App() {
  return (
    <Page>
      <Global />
      <Phone>
        <Screen>
          <StatusRow>
            <Clock>17:52<BellOffIcon /></Clock>
            <StatusIcons>
              <SignalIcon />
              <WifiIcon />
              <Battery>22<BoltIcon /></Battery>
            </StatusIcons>
          </StatusRow>
          <TitleBar>
            <Title>Parkings Rennes</Title>
            <HeaderIcons><FilterIcon /><MoreIcon /></HeaderIcons>
          </TitleBar>
          <SyncBar>
            <Bike w={40} color="#34c759" />
            <T $s={24} $ls={0.5}>Données vélos <small>•</small> à l'instant</T>
            <Fresh><Dot /><T $s={22} $ls={0.25} $c="#34c759">À jour</T></Fresh>
          </SyncBar>
          <Carousel>
            {CARDS.map((c, i) => (
              <Card key={i}>
                <CardHead>
                  <Bike w={40} color="#ff9500" />
                  <T $s={41} $w={700} $c="#000" $lh={43} $ls={0.6}>{c.n}</T>
                  <Pill><T $s={22.5} $w={500} $c="#ff9500" $ls={0.7}>{c.km}</T></Pill>
                </CardHead>
                <CardText $indent={c.indent}>
                  <T $s={24} $w={600} $c="#000" $lh={30} $ls={0.65}>{c.name}</T>
                  <T $s={22} $lh={28} $ls={0.5}>{c.kind}</T>
                </CardText>
              </Card>
            ))}
          </Carousel>
          <Heading $mt={147} $ml={38} $ls={-0.77}><MapIcon />Carte des parkings</Heading>
          <MapCard>
            <MapCanvas>
              <Terrain />
              {PLACES.map(([t, p]) => <Place key={t} {...p}>{t}</Place>)}
              <Shield $x={735.7} $y={1032.5}><b>D 175</b></Shield>
              <Shield $x={774.3} $y={1541.5}><b>D 173</b></Shield>
              <Airport><FaPlane size={22} /></Airport>
              {PINS.map(([x, y, n], i) => (
                <Pin key={i} $x={x} $y={y}>
                  <PinDisc><PinCore><Bike w={30.5} color="#cf7d08" sw={10} /></PinCore></PinDisc>
                  <PinCount>{n}</PinCount>
                </Pin>
              ))}
              <Attribution><FaApple size={27} /><T $s={31} $w={500} $c="inherit" $lh={36} $ls={-0.6}>Maps</T><u>Legal</u></Attribution>
            </MapCanvas>
          </MapCard>
          <Heading $mt={95} $ml={33} $ls={-1.05}>Tous les parkings vélos</Heading>
          <ListCard>
            <ListMain>
              <ListRow $h={42} $gap={21}><BikeBadge><Bike w={31} color="#fff" /></BikeBadge><T $s={34} $w={600} $c="#000" $lh={42}>Eclosel</T></ListRow>
              <ListRow $gap={20}><HashIcon /><T $s={24} $ls={0.3}>10 places • type</T></ListRow>
              <ListRow><T $s={24} $ls={0.4}>Nouvoitou</T></ListRow>
              <ListRow><T $s={22} $ls={0.6}>Route départementale 34</T></ListRow>
            </ListMain>
            <ListSide>
              <Pill $h={53} $r={26} $px={17.5}><T $s={24} $w={500} $c="#ff9500" $ls={0.7}>167.4 km</T></Pill>
              <Pill $r={15} $px={17} $bg="#e7f8ec"><T $s={22.5} $w={500} $c="#34c759" $ls={0.35}>Accès libre</T></Pill>
              <T $s={22} $ls={0.5} $lh={36}>Sur voirie</T>
            </ListSide>
          </ListCard>
          <TabBar>
            <TabList>
              <Tab $mt={3.5} $gap={15.5}><ClockIcon /><T $s={22.5} $w={500} $c="#8a8a8e" $ls={0.3}>Temps réel</T></Tab>
              <Tab $mt={2} $gap={15}><BuildingIcon /><T $s={22.5} $w={500} $c="#8a8a8e" $ls={0.5}>Statique</T></Tab>
              <Tab $mt={0} $gap={19}><Bike w={68} color="#007aff" sw={10} /><T $s={24} $w={600} $c="#007aff" $ls={0.5}>Vélos</T></Tab>
            </TabList>
          </TabBar>
          <Notch><Speaker /><Lens /></Notch>
          <HomeBar />
        </Screen>
      </Phone>
      <Caption>Parkings vélos</Caption>
    </Page>
  );
}
